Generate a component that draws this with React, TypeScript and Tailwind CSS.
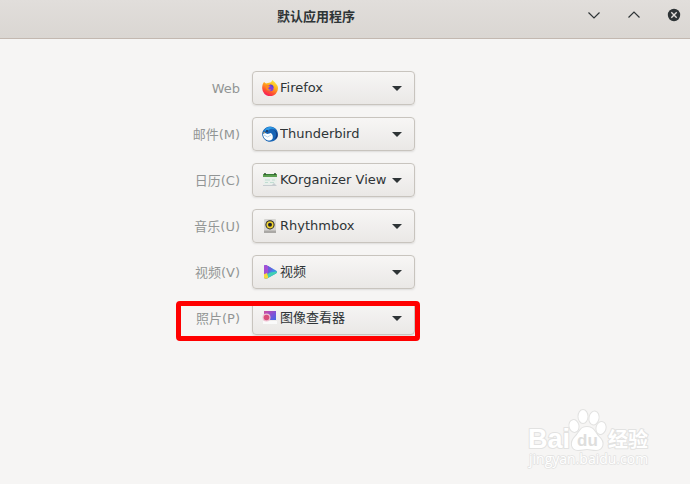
import type { ReactNode } from "react";

const uiFont = "font-['DejaVu_Sans','Noto_Sans_CJK_SC',sans-serif]";

function FirefoxIcon() {
  return (
    <svg viewBox="0 0 16 16" className="size-4" aria-hidden="true">
      <defs>
        <linearGradient id="fx" x1="0.8" y1="0" x2="0.3" y2="1">
          <stop offset="0" stopColor="#fff13f" />
          <stop offset="0.4" stopColor="#ffae1c" />
          <stop offset="0.7" stopColor="#ff5a2e" />
          <stop offset="1" stopColor="#f5125f" />
        </linearGradient>
      </defs>
      <path d="M.8 4 2 2l2 1.500 3-.8 2-.5L10.500 0c1 1.500 2.500 2 3.200 3.500C15 4.500 16 6.300 16 8.300A7.800 7.800 0 0 1 .2 8.300c0-1.800.2-3 .6-4.300Z" fill="url(#fx)" />
      <circle cx="8.200" cy="8" r="3.300" fill="#7f3fe0" />
      <path d="M3.500 5.500c1.500-1 3-.6 4.500.8L6.300 8c0 1.500 1.700 2 3 1.200-1.500 2.800-5.800 1.800-5.800-3.700Z" fill="#ff8a1e" />
      <path d="M8 4.500c2.500-.2 3.700 1.500 3.500 3.500l-2-1.500Z" fill="#5b45c8" />
    </svg>
  );
}

function ThunderbirdIcon() {
  return (
    <svg viewBox="0 0 16 16" className="size-4" aria-hidden="true">
      <path d="M2 3.500C5-.5 11-.3 14 3c3 3.500 2.300 8.500-.8 11-3 2.300-7.500 2.400-10.200-.3C-.3 11-.8 6.500 2 3.500Z" fill="#1764b5" />
      <path d="M4 2.500C7 0 12 .8 14 4c-3-2-6-1.500-8 .5L2 5Z" fill="#2f9ae6" />
      <path d="M11 4c4 1.500 4.500 6 1 9.500l3-1.500c1.500-3.500.5-7-4-8Z" fill="#16377a" />
      <path d="M1 8 3 7l2.500 1 3.500-1 1.500 2c.8 3 .2 5-2.500 5.500C4.500 15 1.300 12.500 1 8Z" fill="#fff" />
      <path d="m2 9 3.500 2L9 9" fill="none" stroke="#b9d6ec" />
      <circle cx="5" cy="4.900" r=".9" fill="#242438" />
      <path d="m2.500 5.500-2 2L3 6.800Z" fill="#e0a347" />
    </svg>
  );
}

function CalendarIcon() {
  return (
    <svg viewBox="0 0 16 16" className="size-4" aria-hidden="true">
      <path d="M1 3h14v8l-3 3H2Z" fill="#e9efeb" />
      <path d="M1 2h14v3H1Z" fill="#5b9e4f" />
      <path d="M3 1v2M13 1v2" stroke="#294d2a" strokeWidth="1.500" />
      <path d="M4 2.500h8" stroke="#377b37" />
      <path d="M3 8h5m2 0h3M3 10.500h3m2 0h4" stroke="#c1ddd2" />
      <path d="M1 14h14l-3-3-2 2H1Z" fill="#c7ccd0" />
    </svg>
  );
}

function SpeakerIcon() {
  return (
    <svg viewBox="0 0 16 16" className="size-4" aria-hidden="true">
      <rect x="2" y="1" width="12" height="14" rx="1" fill="#d5d4d1" />
      <path d="M2 12.500h12V15H2Z" fill="#aaa8a5" />
      <circle cx="8" cy="6.800" r="4.600" fill="#28272c" />
      <circle cx="8" cy="6.800" r="2.800" fill="none" stroke="#efd333" strokeWidth="1.600" />
      <circle cx="8" cy="6.800" r="1" fill="#17213d" />
    </svg>
  );
}

function VideoIcon() {
  return (
    <svg viewBox="0 0 16 16" className="size-4" aria-hidden="true">
      <defs>
        <clipPath id="play">
          <path d="M2 2.500C2 1 3.500.7 5 1.500l9 5c1.500.9 1.500 2 0 3l-9 5c-1.500.8-3 .2-3-1.500Z" />
        </clipPath>
      </defs>
      <g clipPath="url(#play)">
        <path d="M0 0h16v16H0Z" fill="#4288e8" />
        <path d="M0 0h8L6 9l-6 3Z" fill="#a44fd5" />
        <path d="m6 9 10-2v5L5 16Z" fill="#41d0b4" />
        <path d="m0 11 5-2 2 7H0Z" fill="#f6db3c" />
        <path d="m6 1 5 4-5 5Z" fill="#6662dc" />
      </g>
    </svg>
  );
}

function ImageIcon() {
  return (
    <svg viewBox="0 0 16 16" className="size-4" aria-hidden="true">
      <defs>
        <linearGradient id="photo" x1="0" y1="0" x2="1" y2="1">
          <stop offset="0" stopColor="#d64b9b" />
          <stop offset="0.5" stopColor="#8750d4" />
          <stop offset="1" stopColor="#3d6be8" />
        </linearGradient>
      </defs>
      <path d="M1 11h14v3H1Z" fill="#fafafa" />
      <path d="M2 1h12v9H2Z" fill="url(#photo)" />
      <circle cx="4.500" cy="7.500" r="4" fill="#efbfd0" />
      <circle cx="4.500" cy="7.500" r="2.800" fill="#d94d7b" />
    </svg>
  );
}

type Row = { id: string; label: string; value: string; icon: ReactNode; highlighted?: boolean };

const rows: Row[] = [
  { id: "web", label: "Web", value: "Firefox", icon: <FirefoxIcon /> },
  { id: "mail", label: "邮件(M)", value: "Thunderbird", icon: <ThunderbirdIcon /> },
  { id: "calendar", label: "日历(C)", value: "KOrganizer View", icon: <CalendarIcon /> },
  { id: "music", label: "音乐(U)", value: "Rhythmbox", icon: <SpeakerIcon /> },
  { id: "video", label: "视频(V)", value: "视频", icon: <VideoIcon /> },
  { id: "photos", label: "照片(P)", value: "图像查看器", icon: <ImageIcon />, highlighted: true },
];

function AppRow({ id, label, value, icon, highlighted }: Row) {
  return (
    <div className="relative grid w-[415px] grid-cols-[1fr_163px] items-center gap-3">
      <label htmlFor={id} className="pt-0.5 text-right text-[13px] leading-5 text-[#929595]">
        {label}
      </label>
      <div className="relative">
        <select
          id={id}
          defaultValue={value}
          className="block h-[34px] w-full appearance-none rounded border border-[#c8c4be] bg-linear-to-b from-[#f7f6f5] to-[#eae8e6] pl-[27px] text-[13px] text-[#2e3436] shadow-[0_1px_2px_#0000001a]"
        >
          <option>{value}</option>
        </select>
        <span className="pointer-events-none absolute top-[9px] left-[10px]">{icon}</span>
        <svg viewBox="0 0 10 5" className="pointer-events-none absolute top-[15px] right-[13px] h-[5px] w-[10px]" aria-hidden="true">
          <path d="M0 0h10L5 5Z" fill="#2e3436" />
        </svg>
      </div>
      {highlighted && (
        <div className="pointer-events-none absolute top-0 -right-[5px] h-10 w-[244px] rounded-sm border-5 border-[#ff0000]" />
      )}
    </div>
  );
}

function Watermark() {
  return (
    <svg viewBox="0 0 130 64" className="absolute right-[34px] bottom-[12px] h-16 w-[130px]" role="img" aria-label="Baidu 经验">
      <g fill="#fff" stroke="#e2e2e1" strokeWidth="2" paintOrder="stroke" strokeLinejoin="round">
        <text x="2" y="40" fontFamily="Liberation Sans, sans-serif" fontSize="27" fontWeight="700">Bai</text>
        <ellipse cx="48" cy="18" rx="4.500" ry="6" transform="rotate(-12 48 18)" />
        <ellipse cx="57" cy="8.500" rx="4.500" ry="6.500" />
        <ellipse cx="68" cy="10" rx="4.500" ry="6.500" transform="rotate(12 68 10)" />
        <ellipse cx="75" cy="20" rx="4.500" ry="6" transform="rotate(15 75 20)" />
        <path d="M61 19c7 0 8 6 12 10 6 5 4 13-3 13-4 0-6-1-9-1s-5 1-9 1c-7 0-8-8-3-13 5-5 5-10 12-10Z" />
        <text x="82" y="39" fontFamily="Noto Sans CJK SC, sans-serif" fontSize="20" fontWeight="700">经验</text>
        <text x="3" y="56" fontFamily="Open Sans, sans-serif" fontSize="14" strokeWidth="1.500">jingyan.baidu.com</text>
      </g>
      <text x="51" y="38" fontFamily="Liberation Sans, sans-serif" fontSize="17" fontWeight="700" fill="#dededd">du</text>
    </svg>
  );
}

export default function App() {
  return (
    <div className={`relative flex min-h-screen flex-col bg-[#f6f5f4] ${uiFont}`}>
      <header className="flex h-[39px] items-start border-b border-[#c3b8b0] bg-linear-to-b from-[#e1dedb] to-[#dad6d2] pr-1 pl-[50px]">
        <h1 className="flex-1 pt-1.5 text-center font-['Noto_Sans_CJK_SC',sans-serif] text-[13px] leading-5 font-bold text-[#2e3436]">
          默认应用程序
        </h1>
        <div className="flex gap-4 pt-[3px] text-[#2e3436]">
          <button type="button" aria-label="最小化" className="grid size-6 place-items-center">
            <svg viewBox="0 0 14 14" className="size-3.5"><path d="m1.500 4.500 5.500 5.500 5.500-5.500" fill="none" stroke="currentColor" strokeWidth="1.200" /></svg>
          </button>
          <button type="button" aria-label="最大化" className="grid size-6 place-items-center">
            <svg viewBox="0 0 14 14" className="size-3.5"><path d="M1.500 9.500 7 4l5.500 5.500" fill="none" stroke="currentColor" strokeWidth="1.200" /></svg>
          </button>
          <button type="button" aria-label="关闭" className="grid size-6 place-items-center">
            <svg viewBox="0 0 14 14" className="size-3.5">
              <circle cx="7" cy="7" r="6.200" fill="currentColor" />
              <path d="m4.300 4.300 5.400 5.400m0-5.400L4.300 9.700" stroke="#e1dedb" strokeWidth="1.400" />
            </svg>
          </button>
        </div>
      </header>
      <main className="flex flex-col gap-3 pt-8">
        {rows.map((row) => (
          <AppRow key={row.id} {...row} />
        ))}
      </main>
      <Watermark />
    </div>
  );
}
